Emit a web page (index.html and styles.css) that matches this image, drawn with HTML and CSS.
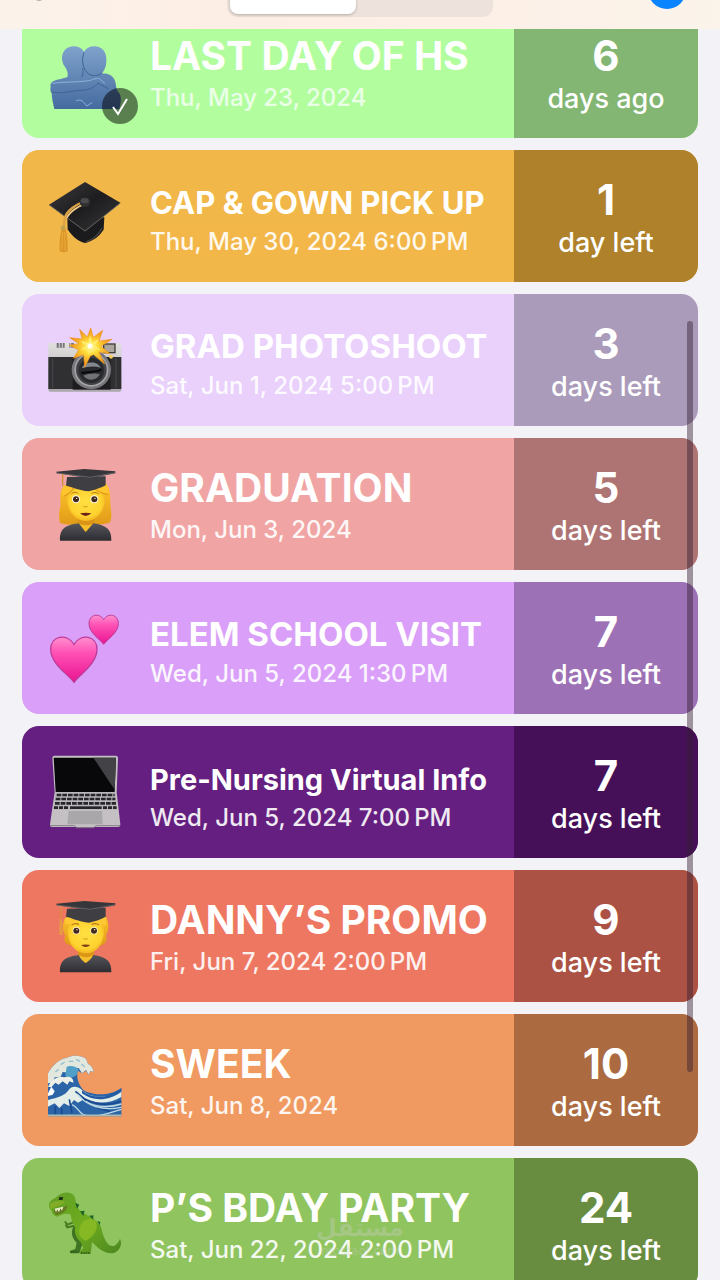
FILE: index.html
```html
<!DOCTYPE html>
<html lang="en">
<head>
    <meta charset="UTF-8">
    <meta name="viewport" content="width=device-width, initial-scale=1.0">
    <title>Countdowns</title>
    <link rel="stylesheet" href="styles.css">
</head>
<body>
    <header class="topbar">
        <button class="settings" type="button" aria-label="Settings"></button>
        <div class="segmented">
            <button class="segment active" type="button" aria-label="Events"></button>
            <button class="segment" type="button" aria-label="Past"></button>
        </div>
        <button class="add" type="button" aria-label="Add"></button>
    </header>

    <main class="events">
        <article class="card lime">
            <div class="icon">
                <svg viewBox="54 15 222 222">
                    <defs>
                        <linearGradient id="hug" x1="0" y1="0" x2="0" y2="1">
                            <stop offset="0" stop-color="#7fa3cb"/>
                            <stop offset="1" stop-color="#456a9f"/>
                        </linearGradient>
                    </defs>
                    <path d="M62 172C58 158 72 150 90 148L112 141C116 128 110 118 101 105C88 76 103 49 131 49C148 49 157 57 162 66C168 54 180 48 196 49C220 51 231 70 229 96C228 112 222 122 216 131C234 129 248 136 255 152C260 168 256 176 268 190C276 204 272 222 268 237H73C70 224 65 204 65 190C61 184 60 178 62 172Z" fill="url(#hug)"/>
                    <g fill="none" stroke="#3f6396" stroke-width="3" stroke-linecap="round">
                        <path d="M162 68C152 92 160 121 176 132C188 140 206 138 215 130"/>
                        <path d="M66 186C92 193 120 183 150 181C174 181 188 176 204 160"/>
                        <path d="M156 140C160 132 160 124 158 116"/>
                        <path d="M204 160C214 164 224 170 234 176"/>
                    </g>
                    <g fill="none" stroke="#8fb1d6" stroke-width="3" stroke-linecap="round">
                        <path d="M68 160C100 154 140 158 176 152C190 150 200 142 208 146L224 160"/>
                        <path d="M140 212C154 206 160 214 170 228L186 218"/>
                    </g>
                </svg>
                <span class="done">
                    <svg viewBox="0 0 36 36"><path d="M11 19L16 26L25 11" fill="none" stroke="#fff" stroke-width="2"/></svg>
                </span>
            </div>
            <div class="info">
                <h2 class="title">LAST DAY OF HS</h2>
                <p class="date">Thu, May 23, 2024</p>
            </div>
            <div class="count"><strong>6</strong><span>days ago</span></div>
        </article>

        <article class="card amber">
            <div class="icon">
                <svg viewBox="54 27 222 222">
                    <defs>
                        <linearGradient id="board" x1="0" y1="0" x2="1" y2="1">
                            <stop offset="0" stop-color="#3c3b3d"/>
                            <stop offset=".5" stop-color="#1d1d1f"/>
                            <stop offset="1" stop-color="#39383a"/>
                        </linearGradient>
                    </defs>
                    <path d="M112 140L113 178C124 196 140 212 164 219C190 214 210 198 221 178L223 142Z" fill="#1b1a1c"/>
                    <path d="M168 216C190 208 206 194 216 174" fill="none" stroke="#444" stroke-width="4"/>
                    <path d="M165 36L271 98L165 185L57 104Z" fill="url(#board)"/>
                    <path d="M57 104L165 183L271 99" fill="none" stroke="#66625c" stroke-width="3"/>
                    <path d="M166 93C140 102 108 122 104 146L101 176" fill="none" stroke="#dca448" stroke-width="7"/>
                    <path d="M168 101C144 108 118 126 110 144" fill="none" stroke="#f3cd83" stroke-width="5"/>
                    <ellipse cx="165" cy="97" rx="16" ry="14" fill="#303033"/>
                    <ellipse cx="164" cy="92" rx="12" ry="8" fill="#4a494c"/>
                    <path d="M96 174H106C112 194 114 220 113 242C106 248 96 248 89 243C88 218 90 194 96 174Z" fill="#dc9627"/>
                    <path d="M98 186L95 240M104 186L106 242" stroke="#f2b54a" stroke-width="2"/>
                    <circle cx="99" cy="174" r="7" fill="#c1a152"/>
                </svg>
            </div>
            <div class="info">
                <h2 class="title compact">CAP &amp; GOWN PICK UP</h2>
                <p class="date">Thu, May 30, 2024 6:00&#8239;PM</p>
            </div>
            <div class="count"><strong>1</strong><span>day left</span></div>
        </article>

        <article class="card lilac">
            <div class="icon">
                <svg viewBox="54 24 222 222">
                    <defs>
                        <linearGradient id="metal" x1="0" y1="0" x2="0" y2="1">
                            <stop offset="0" stop-color="#e2e0df"/>
                            <stop offset="1" stop-color="#a8a6a8"/>
                        </linearGradient>
                        <radialGradient id="flash">
                            <stop offset="0" stop-color="#fffbd0"/>
                            <stop offset=".3" stop-color="#ffe03c"/>
                            <stop offset="1" stop-color="#ef8a18"/>
                        </radialGradient>
                    </defs>
                    <rect x="55" y="84" width="219" height="146" rx="6" fill="url(#metal)"/>
                    <path d="M80 84H104V98H80ZM118 84H132V98H118Z" fill="#77757a"/>
                    <path d="M88 82V98M97 82V98M122 82V98" stroke="#d8d6d8" stroke-width="3"/>
                    <rect x="55" y="126" width="219" height="96" fill="#303033"/>
                    <path d="M68 130V220M258 130V220" stroke="#4a494d" stroke-width="3"/>
                    <rect x="128" y="126" width="114" height="98" fill="#1d1d20"/>
                    <rect x="221" y="87" width="34" height="26" fill="#aaa69d" stroke="#3f3c38" stroke-width="4"/>
                    <circle cx="184" cy="164" r="59" fill="#77777b"/>
                    <circle cx="184" cy="164" r="51" fill="#a5a4a6"/>
                    <circle cx="184" cy="164" r="46" fill="#404246"/>
                    <circle cx="184" cy="166" r="38" fill="#292a2e"/>
                    <path d="M155 160C164 138 202 136 212 158C194 152 174 154 155 160Z" fill="#85898e"/>
                    <path d="M160 182C176 174 198 174 210 178C200 198 174 200 160 182Z" fill="#717278"/>
                    <path d="M154 174C174 168 196 174 214 164" fill="none" stroke="#08090b" stroke-width="6"/>
                    <circle cx="243" cy="125" r="6" fill="#f2cc5c"/>
                    <path d="M182 39L190 67L218 46L207 78L246 73L213 94L240 116L207 111L224 147L191 119L181 123L164 157L161 119L130 130L146 105L118 91L147 86L119 68L156 72L149 43L172 66Z" fill="url(#flash)" stroke="#ef971f" stroke-width="2"/>
                    <path d="M181 62L187 83L208 71L195 91L211 106L188 101L176 119L173 101L151 104L167 92L151 78L174 82Z" fill="#ffed70"/>
                    <circle cx="180" cy="93" r="8" fill="#fffef0"/>
                </svg>
            </div>
            <div class="info">
                <h2 class="title medium">GRAD PHOTOSHOOT</h2>
                <p class="date">Sat, Jun 1, 2024 5:00&#8239;PM</p>
            </div>
            <div class="count"><strong>3</strong><span>days left</span></div>
        </article>

        <article class="card rose">
            <div class="icon">
                <svg viewBox="54 36 222 222">
                    <defs>
                        <linearGradient id="hair" x1="0" y1="0" x2="0" y2="1">
                            <stop offset="0" stop-color="#ffc62c"/>
                            <stop offset="1" stop-color="#e09a18"/>
                        </linearGradient>
                        <radialGradient id="face" cx=".5" cy=".45" r=".6">
                            <stop offset="0" stop-color="#ffe044"/>
                            <stop offset=".7" stop-color="#fed32f"/>
                            <stop offset="1" stop-color="#eeab1c"/>
                        </radialGradient>
                        <linearGradient id="gown" x1="0" y1="0" x2="0" y2="1">
                            <stop offset="0" stop-color="#55565c"/>
                            <stop offset="1" stop-color="#2c2c31"/>
                        </linearGradient>
                    </defs>
                    <path d="M104 90C90 104 90 124 92 150C86 170 86 188 90 203C116 214 220 214 240 202C248 184 242 166 241 144C241 118 240 98 226 84Z" fill="url(#hair)"/>
                    <path d="M144 178H192V214L167 234L144 214Z" fill="#db9416"/>
                    <path d="M90 257C89 222 104 211 146 205C154 214 160 224 167 231C174 224 182 214 190 205C230 211 245 224 244 257Z" fill="url(#gown)"/>
                    <path d="M148 206C160 212 176 212 188 206L167 230Z" fill="#f6be2b"/>
                    <path d="M111 122C112 104 126 94 168 94C206 94 222 106 224 128C226 166 202 198 168 198C134 198 108 166 111 122Z" fill="url(#face)"/>
                    <path d="M111 92C96 98 94 116 101 124C116 118 128 108 132 94ZM186 92C202 108 222 118 237 118C235 101 230 92 222 86Z" fill="#ffc52e"/>
                    <path d="M103 123C116 117 127 108 132 96M188 96C202 110 220 117 235 118" fill="none" stroke="#d28d16" stroke-width="3"/>
                    <path d="M111 66L108 92C126 96 146 106 177 109C196 104 214 98 227 91V64Z" fill="#3e3e43"/>
                    <path d="M79 50L163 42L256 49V55L181 70L80 55Z" fill="#36363b"/>
                    <path d="M80 54L181 67L256 53" fill="none" stroke="#77777c" stroke-width="2"/>
                    <path d="M98 57V92" stroke="#cf9038" stroke-width="4"/>
                    <circle cx="138" cy="133" r="12" fill="#fff9e5"/>
                    <circle cx="193" cy="133" r="12" fill="#fff9e5"/>
                    <circle cx="138" cy="133" r="9" fill="#432b1b"/>
                    <circle cx="193" cy="133" r="9" fill="#432b1b"/>
                    <circle cx="140" cy="130" r="2" fill="#fff"/>
                    <circle cx="195" cy="130" r="2" fill="#fff"/>
                    <path d="M124 117C130 110 140 111 145 116M184 116C190 111 200 111 207 117" fill="none" stroke="#b97a14" stroke-width="3"/>
                    <path d="M160 154Q167 158 173 154" fill="none" stroke="#d39616" stroke-width="3"/>
                    <path d="M150 175Q167 171 184 175Q167 191 150 175Z" fill="#6e2418"/>
                </svg>
            </div>
            <div class="info">
                <h2 class="title">GRADUATION</h2>
                <p class="date">Mon, Jun 3, 2024</p>
            </div>
            <div class="count"><strong>5</strong><span>days left</span></div>
        </article>

        <article class="card orchid">
            <div class="icon">
                <svg viewBox="54 33 222 222">
                    <defs>
                        <linearGradient id="heart" x1="0" y1="0" x2="0" y2="1">
                            <stop offset="0" stop-color="#ff8fce"/>
                            <stop offset=".35" stop-color="#ff50b4"/>
                            <stop offset="1" stop-color="#e91491"/>
                        </linearGradient>
                    </defs>
                    <path d="M132 247C116 224 62 192 62 148C62 108 110 98 132 133C154 98 201 108 201 148C201 192 148 224 132 247Z" fill="url(#heart)" stroke="#bd3b98" stroke-width="4"/>
                    <path d="M221 133C211 118 177 99 177 71C177 43 208 37 221 59C234 37 265 43 265 71C265 99 231 118 221 133Z" fill="url(#heart)" stroke="#bd3b98" stroke-width="3"/>
                </svg>
            </div>
            <div class="info">
                <h2 class="title medium">ELEM SCHOOL VISIT</h2>
                <p class="date">Wed, Jun 5, 2024 1:30&#8239;PM</p>
            </div>
            <div class="count"><strong>7</strong><span>days left</span></div>
        </article>

        <article class="card purple">
            <div class="icon">
                <svg viewBox="54 30 222 222">
                    <path d="M67 38Q67 32 74 32H257Q264 32 264 38L260 142L271 238Q271 246 264 246H66Q59 246 60 238L74 142Z" fill="#c4c0c4"/>
                    <path d="M71 38H258L254 141H77Z" fill="#08080a"/>
                    <path d="M190 38H258L254 134Z" fill="#434247"/>
                    <path d="M76 142H257L261 194H69Z" fill="#b9b6ba"/>
                    <g stroke="#27252a" stroke-width="8" stroke-dasharray="14 3">
                        <path d="M80 150H254"/>
                        <path d="M77 162H256"/>
                        <path d="M75 175H258"/>
                    </g>
                    <path d="M72 188H117M219 188H260" stroke="#27252a" stroke-width="8" stroke-dasharray="12 3"/>
                    <path d="M120 188H215" stroke="#27252a" stroke-width="8"/>
                    <path d="M116 198H216L218 238H112Z" fill="#aaa7aa"/>
                    <path d="M60 242H134L139 248H192L197 242H270" fill="none" stroke="#858086" stroke-width="3"/>
                </svg>
            </div>
            <div class="info">
                <h2 class="title small">Pre-Nursing Virtual Info</h2>
                <p class="date">Wed, Jun 5, 2024 7:00&#8239;PM</p>
            </div>
            <div class="count"><strong>7</strong><span>days left</span></div>
        </article>

        <article class="card coral">
            <div class="icon">
                <svg viewBox="54 27 222 222">
                    <path d="M105 84C96 102 98 124 106 138C98 152 108 164 122 166H214C228 162 232 146 228 138C238 118 238 94 224 76Z" fill="url(#hair)"/>
                    <path d="M144 168H192V202L167 222L144 202Z" fill="#db9416"/>
                    <path d="M148 196C160 204 176 204 188 196L180 214L167 222L154 214Z" fill="#f6be2b"/>
                    <path d="M90 247C89 212 104 201 146 195C152 208 160 215 167 219C174 215 184 208 190 195C230 201 245 214 244 247Z" fill="url(#gown)"/>
                    <path d="M113 114C114 94 128 84 168 84C208 84 220 96 222 116C224 158 202 190 168 190C134 190 110 158 113 114Z" fill="url(#face)"/>
                    <path d="M105 98C118 108 136 102 146 88C168 102 202 106 229 106L225 78L111 75Z" fill="#ffc934"/>
                    <path d="M111 56L108 80C122 82 145 95 177 98C196 94 214 87 227 80V54Z" fill="#3e3e43"/>
                    <path d="M79 41L163 33L256 40V46L181 61L80 46Z" fill="#36363b"/>
                    <path d="M80 45L181 58L256 44" fill="none" stroke="#77777c" stroke-width="2"/>
                    <path d="M94 48L92 88" stroke="#d8933a" stroke-width="3"/>
                    <path d="M89 88H96L99 135H88Z" fill="#e89a43"/>
                    <circle cx="139" cy="122" r="11" fill="#fff9e5"/>
                    <circle cx="192" cy="122" r="11" fill="#fff9e5"/>
                    <circle cx="139" cy="122" r="9" fill="#432b1b"/>
                    <circle cx="192" cy="122" r="9" fill="#432b1b"/>
                    <circle cx="141" cy="119" r="2" fill="#fff"/>
                    <circle cx="194" cy="119" r="2" fill="#fff"/>
                    <path d="M125 105Q137 97 147 104M185 104Q196 97 207 105" fill="none" stroke="#bd7913" stroke-width="4"/>
                    <path d="M160 146Q167 150 173 146" fill="none" stroke="#d39616" stroke-width="3"/>
                    <path d="M153 165Q167 162 181 165Q167 177 153 165Z" fill="#7c3a16"/>
                </svg>
            </div>
            <div class="info">
                <h2 class="title">DANNY’S PROMO</h2>
                <p class="date">Fri, Jun 7, 2024 2:00&#8239;PM</p>
            </div>
            <div class="count"><strong>9</strong><span>days left</span></div>
        </article>

        <article class="card orange">
            <div class="icon">
                <svg viewBox="54 9 222 222">
                    <path d="M54 229V100C66 78 84 58 112 53C130 44 154 47 168 56L174 72C184 76 190 86 190 96L181 94L176 104L168 92L156 100L144 92C138 108 144 132 160 150C184 166 238 170 274 144V229Z" fill="#2c64a8"/>
                    <path d="M54 130V100C66 78 84 58 112 53C130 44 154 47 168 56L174 72C184 76 190 86 190 96L181 93L176 104L168 90L156 100L146 84L126 86L118 98L98 96L92 110L74 112L68 128Z" fill="#e3e8df"/>
                    <path d="M110 80C122 76 136 78 146 88L140 104C130 114 118 116 106 108Z" fill="#4f9fc8"/>
                    <path d="M54 140C66 118 84 106 102 112C120 106 132 116 130 128L118 124L112 134L98 124L86 134L76 128L64 142Z" fill="#eef0e7"/>
                    <path d="M54 160L64 140L74 154L68 164L54 168Z" fill="#fff"/>
                    <path d="M54 180C84 172 104 168 116 150C126 136 142 138 156 150C186 178 240 176 274 151V171C236 194 198 190 162 178L144 188L132 180L118 198L102 190L88 204L74 190L54 200Z" fill="#e4eee8"/>
                    <path d="M156 151C190 181 240 174 274 145V155C240 181 190 187 156 160Z" fill="#225ba4"/>
                    <g fill="none" stroke="#184a91" stroke-width="5">
                        <path d="M136 154C164 174 182 204 240 214"/>
                        <path d="M158 174C190 190 226 202 274 184"/>
                        <path d="M118 178L126 220M76 198V226M95 204V228"/>
                    </g>
                    <g fill="none" stroke="#bed9e3" stroke-width="4">
                        <path d="M144 164C168 196 216 214 274 202"/>
                        <path d="M168 184C194 202 238 204 274 192"/>
                        <path d="M126 194C150 204 144 222 168 226M208 226C230 222 248 216 274 208"/>
                    </g>
                    <path d="M92 74L104 66M116 64H130M138 58L150 64M154 72L164 80M76 96L86 88" stroke="#91bdd1" stroke-width="4"/>
                    <path d="M54 226H274" stroke="#a9bdb5" stroke-width="5"/>
                </svg>
            </div>
            <div class="info">
                <h2 class="title">SWEEK</h2>
                <p class="date">Sat, Jun 8, 2024</p>
            </div>
            <div class="count"><strong>10</strong><span>days left</span></div>
        </article>

        <article class="card green">
            <div class="icon">
                <svg viewBox="54 21 222 222">
                    <defs>
                        <linearGradient id="rex" x1="0" y1="0" x2="1" y2="1">
                            <stop offset="0" stop-color="#5f9f25"/>
                            <stop offset=".5" stop-color="#6fac1e"/>
                            <stop offset="1" stop-color="#4b8721"/>
                        </linearGradient>
                    </defs>
                    <path d="M128 128L112 134L106 126M130 138L112 142L108 136" fill="none" stroke="#477c20" stroke-width="6" stroke-linecap="round"/>
                    <path d="M130 138C122 160 126 174 140 188L136 207L119 213L121 220H148L158 190L172 150Z" fill="#3f7422"/>
                    <path d="M57 72C62 58 74 56 84 47C102 34 124 34 134 50C138 62 138 78 150 92C170 106 198 116 212 138C218 160 222 182 238 196C254 204 264 190 270 176C278 192 270 212 252 219C224 224 204 204 186 186L182 222H150V214L160 204L152 186C138 174 132 158 136 140C126 130 124 114 122 104C108 98 96 104 82 110C70 106 66 100 65 92C58 86 56 80 57 72Z" fill="url(#rex)"/>
                    <path d="M150 142C154 118 184 106 198 126C208 146 188 174 168 182C150 176 142 160 150 142Z" fill="#86b824"/>
                    <path d="M72 88C84 94 98 82 112 76C112 92 98 102 78 105C72 100 72 94 72 88Z" fill="#647b24"/>
                    <path d="M74 86L78 97L82 88L87 97L91 85L96 92L100 80" fill="#f0efd3"/>
                    <path d="M58 73C74 62 90 60 106 64C100 74 78 80 62 88Z" fill="#83ac27"/>
                    <path d="M88 51L100 52L97 60L86 60Z" fill="#202e17"/>
                    <path d="M136 68L148 74L141 86ZM150 94L164 92L160 108ZM177 107L190 106L190 119ZM202 122L211 126L209 136Z" fill="#1e6427"/>
                    <path d="M122 216H145M153 219H181" stroke="#315b1c" stroke-width="4" stroke-dasharray="5 2"/>
                </svg>
            </div>
            <div class="info">
                <h2 class="title">P’S BDAY PARTY</h2>
                <p class="date">Sat, Jun 22, 2024 2:00&#8239;PM</p>
            </div>
            <div class="count"><strong>24</strong><span>days left</span></div>
        </article>
    </main>

    <div class="scrollbar"></div>
    <div class="watermark"><span lang="ar">مستقل</span><small>mostaql.com</small></div>
</body>
</html>
```
FILE: styles.css
```css
* {
    box-sizing: border-box;
}
body {
    margin: 0;
    height: 100vh;
    overflow: hidden;
    position: relative;
    background-color: #f3f2f7;
    font-family: Inter, "Liberation Sans", sans-serif;
    color: #fff;
}
button {
    border: none;
    padding: 0;
    cursor: pointer;
}

/* top bar, scrolled partly out of view */
.topbar {
    position: absolute;
    top: -31px;
    left: 0;
    right: 0;
    z-index: 2;
    height: 60px;
    padding: 0 34px 12px;
    display: grid;
    grid-template-columns: 1fr 266px 1fr;
    align-items: end;
    background: linear-gradient(90deg, #fbf3ea, #fdeee5 30%, #fcf0e7 70%, #fbf4ea);
}
.settings {
    width: 10px;
    height: 10px;
    margin-bottom: 16px;
    border-radius: 50%;
    background-color: #b9b0ae;
}
.segmented {
    display: grid;
    grid-template-columns: 1fr 1fr;
    height: 36px;
    padding: 3px;
    border-radius: 10px;
    background-color: #eee3dc;
}
.segment {
    border-radius: 8px;
    background: none;
}
.segment.active {
    background-color: #fff;
    margin-right: 4px;
    box-shadow: 0 1px 3px rgba(0, 0, 0, 0.25);
}
.add {
    justify-self: end;
    width: 38px;
    height: 38px;
    margin-bottom: 8px;
    border-radius: 50%;
    background-color: #0a84ff;
}

/* event cards */
.events {
    display: flex;
    flex-direction: column;
    gap: 12px;
    padding: 6px 22px;
}
.card {
    display: flex;
    flex-shrink: 0;
    height: 132px;
    padding-left: 26px;
    border-radius: 17px;
    overflow: hidden;
}
.icon {
    position: relative;
    align-self: center;
    width: 74px;
    height: 74px;
    margin-right: 28px;
}
.icon svg {
    display: block;
    width: 100%;
    height: 100%;
}
.done {
    position: absolute;
    right: -16px;
    bottom: -15px;
    width: 36px;
    height: 36px;
    border-radius: 50%;
    background-color: rgba(0, 0, 0, 0.5);
}
.info {
    flex: 1;
    display: flex;
    flex-direction: column;
    justify-content: flex-end;
    gap: 4px;
    padding-bottom: 26px;
    white-space: nowrap;
}
.title {
    margin: 0;
    font-size: 39px;
    line-height: 48px;
    font-weight: 700;
}
.title.medium {
    font-size: 33px;
    line-height: 44px;
}
.title.compact {
    font-size: 31px;
    line-height: 42px;
}
.title.small {
    font-size: 29px;
    line-height: 40px;
}
.date {
    margin: 0;
    font-size: 24px;
    line-height: 28px;
    font-weight: 500;
    opacity: 0.9;
}
.count {
    display: flex;
    flex-direction: column;
    justify-content: flex-end;
    gap: 5px;
    width: 184px;
    padding-bottom: 23px;
    text-align: center;
}
.count strong {
    font-size: 42px;
    line-height: 44px;
}
.count span {
    font-size: 27px;
    line-height: 32px;
    font-weight: 500;
}

.lime { background-color: #b2fe9f; }
.lime .count { background-color: #83b673; }
.lime .date { opacity: 0.75; }
.amber { background-color: #f2b749; }
.amber .count { background-color: #ae812a; }
.lilac { background-color: #e9d1fc; }
.lilac .count { background-color: #ab9bba; }
.rose { background-color: #f0a5a4; }
.rose .count { background-color: #ae7473; }
.orchid { background-color: #da9ff8; }
.orchid .count { background-color: #9d71b5; }
.purple { background-color: #641f80; }
.purple .count { background-color: #451058; }
.coral { background-color: #ee7761; }
.coral .count { background-color: #ab5244; }
.orange { background-color: #f09960; }
.orange .count { background-color: #ab6a40; }
.green { background-color: #90c45f; }
.green .count { background-color: #688d41; }

.scrollbar {
    position: absolute;
    top: 321px;
    right: 27px;
    width: 6px;
    height: 751px;
    border-radius: 3px;
    background-color: rgba(50, 30, 50, 0.45);
}
.watermark {
    position: absolute;
    bottom: 22px;
    left: 50%;
    width: 90px;
    margin-left: -45px;
    display: flex;
    flex-direction: column;
    align-items: center;
    color: rgba(205, 205, 205, 0.35);
    font-family: "DejaVu Sans", sans-serif;
}
.watermark span {
    font-size: 24px;
    line-height: 32px;
    font-weight: 700;
}
.watermark small {
    font-size: 12px;
    line-height: 14px;
}
```
